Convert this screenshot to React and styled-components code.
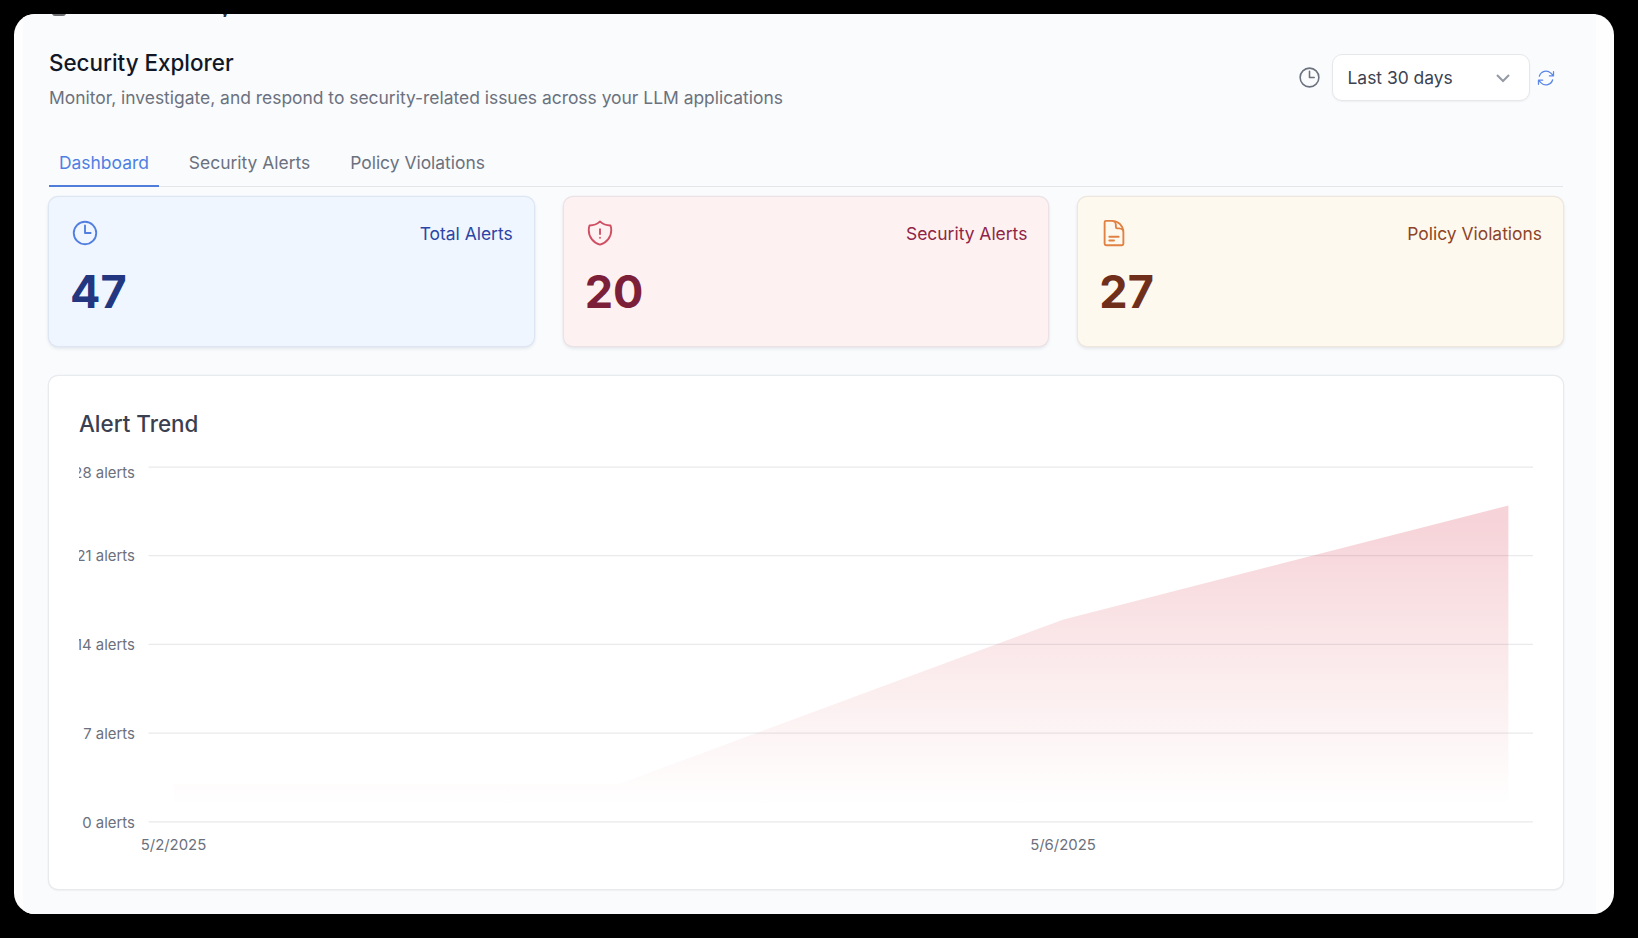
import React from 'react';
import styled, { createGlobalStyle } from 'styled-components';
import {
  HiOutlineClock,
  HiOutlineShieldExclamation,
  HiOutlineDocumentText,
  HiOutlineArrowPath,
} from 'react-icons/hi2';

const GlobalStyle = createGlobalStyle`
  *, *::before, *::after { box-sizing: border-box; }
  body {
    margin: 0;
    background: #000;
    font-family: Inter, "Liberation Sans", sans-serif;
    font-size: 17.43px;
    line-height: 25px;
    overflow: hidden;
  }
  h1, h2, p { margin: 0; }
`;

const Stage = styled.div`
  width: 1638px;
  height: 938px;
  padding: 14px 24px 24px 14px;
  background: #000;
`;

const Frame = styled.div`
  height: 900px;
  padding: 0 18px 0 9px;
  border-radius: 21px;
  background: #fefefe;
  overflow: hidden;
`;

const Page = styled.main`
  height: 100%;
  padding: 0 33px 0 26px;
  background: #f9fbfd;
`;

const ScrolledBar = styled.div`
  display: flex;
  align-items: flex-end;
  justify-content: space-between;
  width: 182px;
  height: 3px;
  padding-left: 3px;
  margin-bottom: 28px;
  overflow: hidden;
  color: #2b2e35;
  font-size: 21px;
  font-weight: 500;
  line-height: 16px;
`;

const ScrolledIcon = styled.span`
  width: 14px;
  height: 12px;
  margin-bottom: 1px;
  border-radius: 3px;
  background: #6a6c70;
`;

const Header = styled.header`
  display: flex;
  align-items: center;
  justify-content: space-between;
  height: 65px;
`;

const Title = styled.h1`
  margin-bottom: 5px;
  color: #111727;
  font-size: 22.4px;
  font-weight: 500;
  line-height: 35px;
`;

const Subtitle = styled.p`
  color: #6c717e;
`;

const Filters = styled.div`
  display: flex;
  align-items: center;
  padding-right: 7.5px;
  color: #6c717e;
`;

const Select = styled.button`
  display: flex;
  align-items: center;
  justify-content: space-between;
  width: 198px;
  height: 47px;
  margin: 0 6px 0 10px;
  padding: 0 17px 0 15px;
  border: 1px solid #e5e7eb;
  border-radius: 10px;
  background: #fff;
  box-shadow: 0 1px 2px rgba(0, 0, 0, 0.05);
  color: #3c4251;
  font: inherit;
`;

const Refresh = styled.span`
  display: flex;
  color: #5b87e6;
`;

const Tabs = styled.nav`
  display: flex;
  gap: 20px;
  height: 47px;
  margin: 30px 0 10px;
  box-shadow: inset 0 -1px #e3e6ea;
`;

const Tab = styled.a`
  padding: 10px 10px 0;
  border-bottom: 2.5px solid ${(p) => (p.$active ? '#4f7dd9' : 'transparent')};
  color: ${(p) => (p.$active ? '#4f7fe3' : '#6c717e')};
`;

const Stats = styled.section`
  display: grid;
  grid-template-columns: repeat(3, 1fr);
  gap: 30px;
  margin-bottom: 30px;
`;

const StatCard = styled.article`
  height: 149px;
  padding: 21px 21px 0 21px;
  border-radius: 9px;
  background: ${(p) => p.$bg};
  box-shadow: 0 0 0 1.25px ${(p) => p.$ring}, 0 2px 4px rgba(20, 30, 60, 0.12);
`;

const StatTop = styled.div`
  display: flex;
  align-items: center;
  justify-content: space-between;
  height: 30px;
  color: ${(p) => p.$color};
`;

const StatIcon = styled.span`
  display: flex;
  color: ${(p) => p.$color};
`;

const StatValue = styled.p`
  margin-top: 19px;
  color: ${(p) => p.$color};
  font-size: 45px;
  font-weight: 700;
  line-height: 50px;
`;

const ChartCard = styled.section`
  height: 513px;
  padding: 30px;
  border-radius: 9px;
  background: #fff;
  box-shadow: 0 0 0 1.25px #e8eaed, 0 1px 3px rgba(0, 0, 0, 0.08);
`;

const ChartTitle = styled.h2`
  color: #3a4050;
  font-size: 22.4px;
  font-weight: 500;
  line-height: 35px;
`;

const Plot = styled.svg`
  display: block;
  overflow: hidden;

  text {
    fill: #6c717e;
    font-size: 14.9px;
  }
`;

const STATS = [
  { label: 'Total Alerts', value: 47, Icon: HiOutlineClock, bg: '#eff6ff', ring: '#dfe6f3', icon: '#527fdf', text: '#2c45a5', num: '#22377f' },
  { label: 'Security Alerts', value: 20, Icon: HiOutlineShieldExclamation, bg: '#fef1f2', ring: '#ece2e6', icon: '#cf4f63', text: '#8f2546', num: '#7c1f39' },
  { label: 'Policy Violations', value: 27, Icon: HiOutlineDocumentText, bg: '#fef9ee', ring: '#efe6de', icon: '#e08243', text: '#8d4429', num: '#702f1a' },
];

const TICKS = [
  { value: 28, y: 26, base: 36.7 },
  { value: 21, y: 114.7, base: 120 },
  { value: 14, y: 203.4, base: 209 },
  { value: 7, y: 292.1, base: 297.7 },
  { value: 0, y: 380.8, base: 386.6 },
];

const POINTS = [3, 3, 16, 25].map((v, i) => [95 + i * 444.8, 381 - v * 12.66]);

function AlertTrend() {
  const line = POINTS.map(([x, y]) => `${x},${y}`).join(' L');
  return (
    <Plot width="1454" height="418">
      <defs>
        <linearGradient id="alerts" x1="0" y1="0" x2="0" y2="1">
          <stop offset="5%" stopColor="#d42a42" stopOpacity="0.205" />
          <stop offset="95%" stopColor="#d83a40" stopOpacity="0" />
        </linearGradient>
      </defs>
      {TICKS.map((t) => (
        <g key={t.value}>
          <line x1="69.5" x2="1454" y1={t.y} y2={t.y} stroke="#e9eaec" strokeWidth="1.25" />
          <text x="55.9" y={t.base} textAnchor="end">{t.value} alerts</text>
        </g>
      ))}
      <path d={`M${line} L1429.4,381 L95,381 Z`} fill="url(#alerts)" />
      <text x="94.5" y="409" textAnchor="middle">5/2/2025</text>
      <text x="984" y="409" textAnchor="middle">5/6/2025</text>
    </Plot>
  );
}

export default function App() {
  return (
    <Stage>
      <GlobalStyle />
      <Frame>
        <Page>
          <ScrolledBar>
            <ScrolledIcon />
            <span>y</span>
          </ScrolledBar>
          <Header>
            <div>
              <Title>Security Explorer</Title>
              <Subtitle>Monitor, investigate, and respond to security-related issues across your LLM applications</Subtitle>
            </div>
            <Filters>
              <HiOutlineClock size={25} />
              <Select>
                Last 30 days
                <svg width="18" height="18" viewBox="0 0 18 18" fill="none" stroke="#9499a4" strokeWidth="2">
                  <path d="M3 6l6 6 6-6" />
                </svg>
              </Select>
              <Refresh>
                <HiOutlineArrowPath size={20} />
              </Refresh>
            </Filters>
          </Header>
          <Tabs>
            <Tab $active>Dashboard</Tab>
            <Tab>Security Alerts</Tab>
            <Tab>Policy Violations</Tab>
          </Tabs>
          <Stats>
            {STATS.map(({ label, value, Icon, bg, ring, icon, text, num }) => (
              <StatCard key={label} $bg={bg} $ring={ring}>
                <StatTop $color={text}>
                  <StatIcon $color={icon}>
                    <Icon size={30} />
                  </StatIcon>
                  {label}
                </StatTop>
                <StatValue $color={num}>{value}</StatValue>
              </StatCard>
            ))}
          </Stats>
          <ChartCard>
            <ChartTitle>Alert Trend</ChartTitle>
            <AlertTrend />
          </ChartCard>
        </Page>
      </Frame>
    </Stage>
  );
}
